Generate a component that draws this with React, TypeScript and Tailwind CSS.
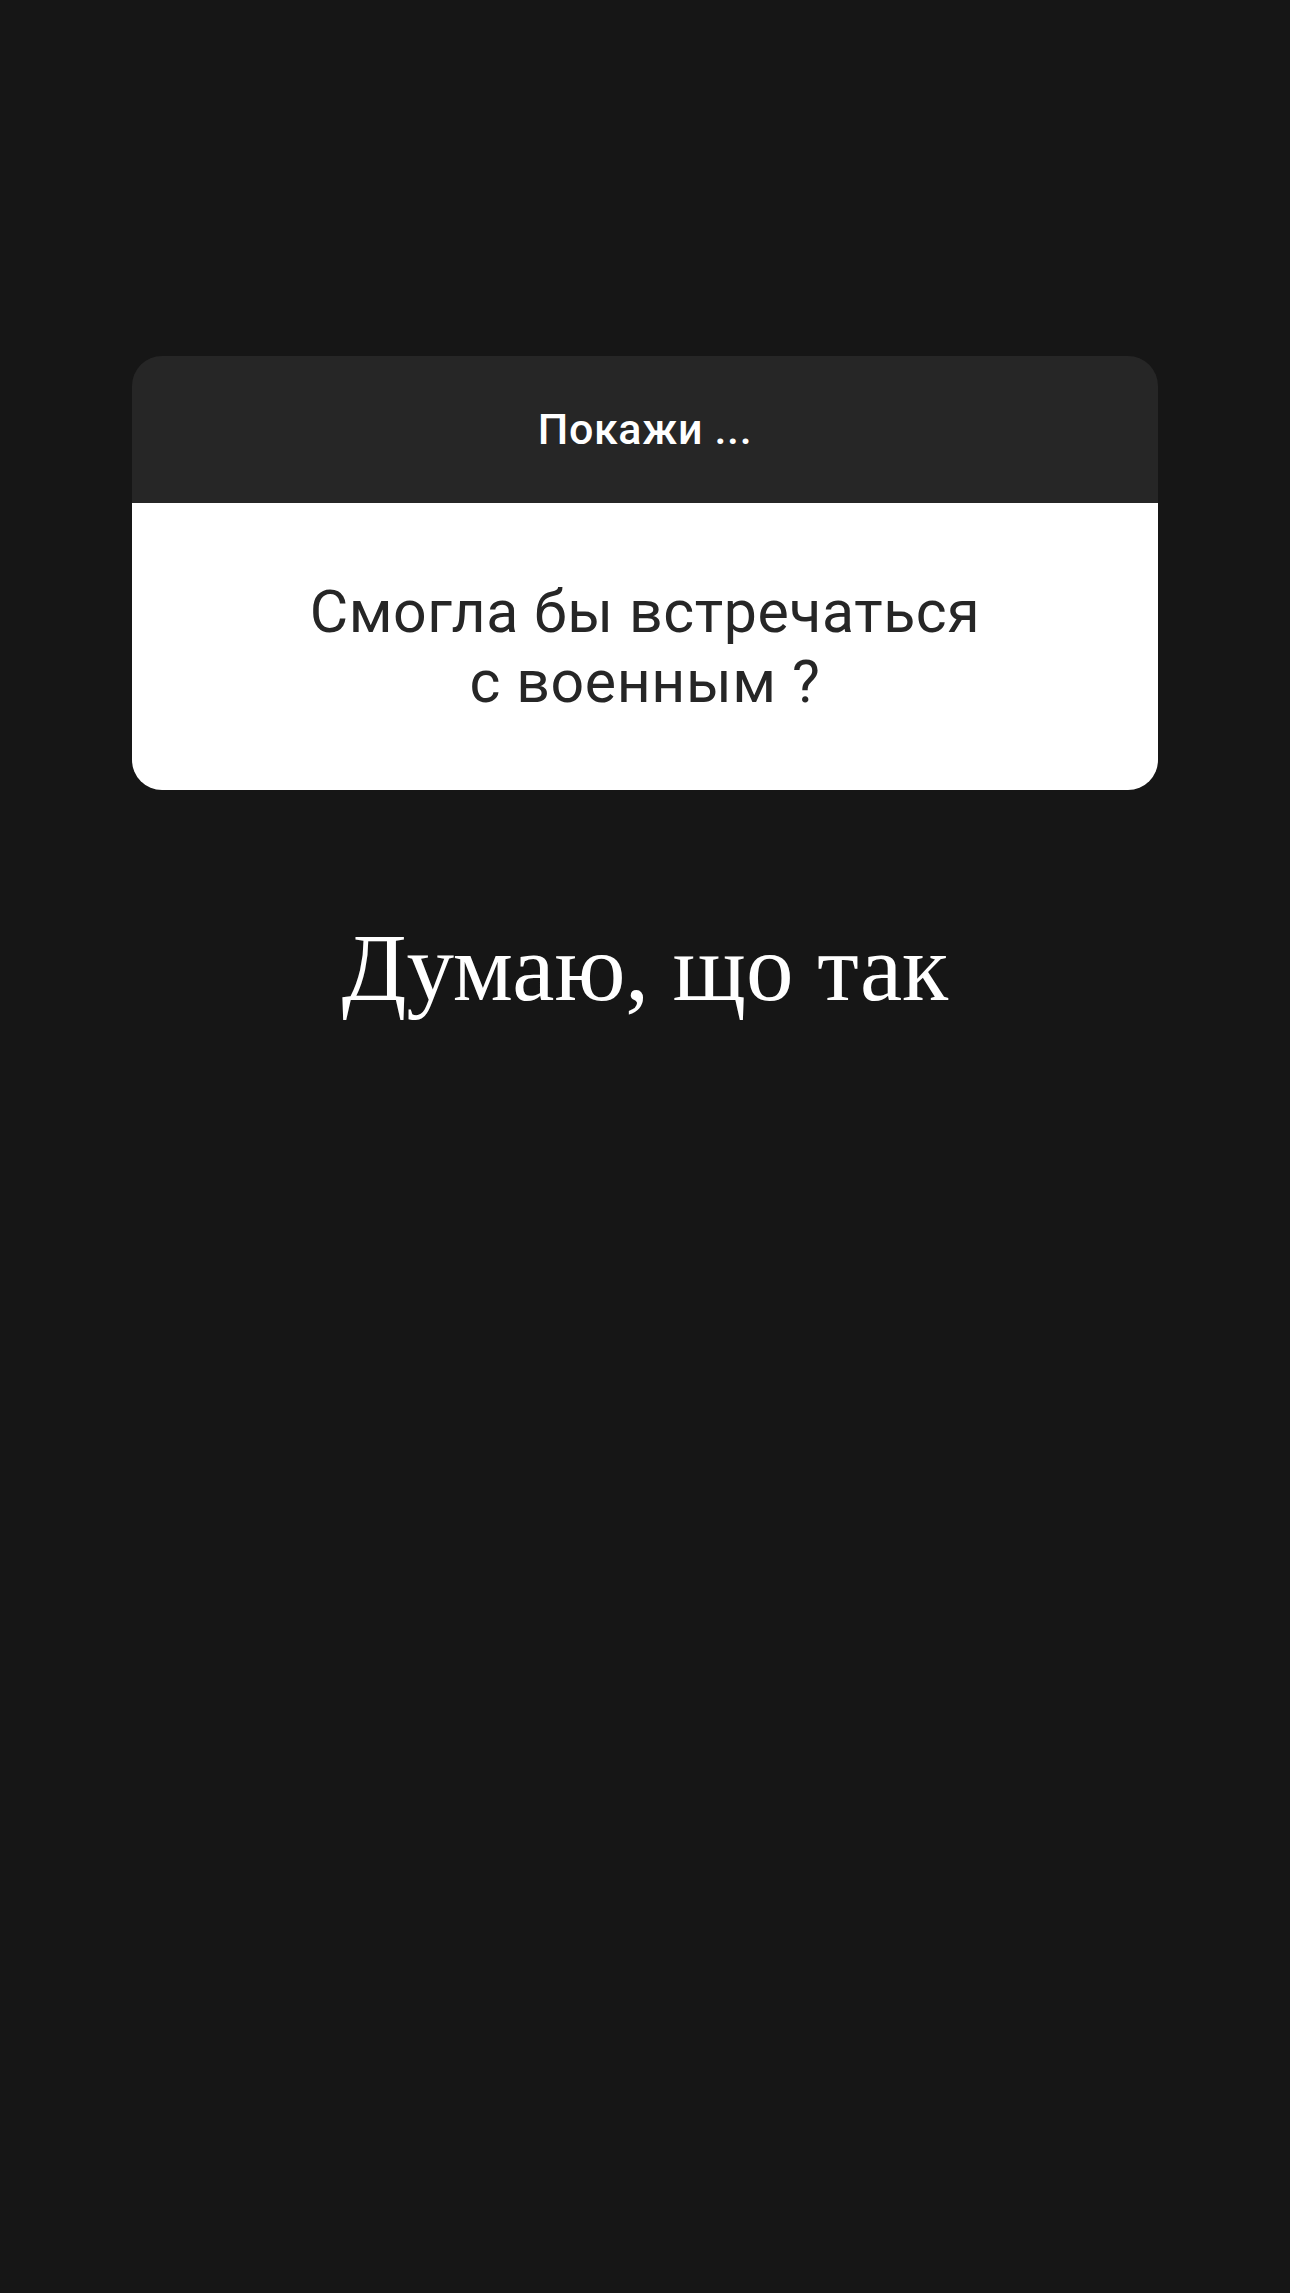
const App = () => {
  return (
    <div className="w-full h-[2293px] bg-[#161616] flex flex-col items-center pt-[356px]">
      <div className="w-[1026px] rounded-[30px] overflow-hidden">
        <div className="h-[147px] bg-[#262626] flex items-center justify-center">
          <h3 className="text-white text-[43px] tracking-[0.015em] font-medium font-['Roboto',sans-serif]">
            Покажи ...
          </h3>
        </div>
        <div className="h-[287px] bg-white flex items-center justify-center">
          <p className="text-[#262626] text-[59px] leading-[70px] tracking-[0.01em] text-center font-['Roboto',sans-serif]">
            Смогла бы встречаться
            <br />с военным ?
          </p>
        </div>
      </div>
      <h2 className="mt-[131px] text-white text-[95px] leading-none font-['Liberation_Serif',serif]">
        Думаю, що так
      </h2>
    </div>
  );
};

export default App;
